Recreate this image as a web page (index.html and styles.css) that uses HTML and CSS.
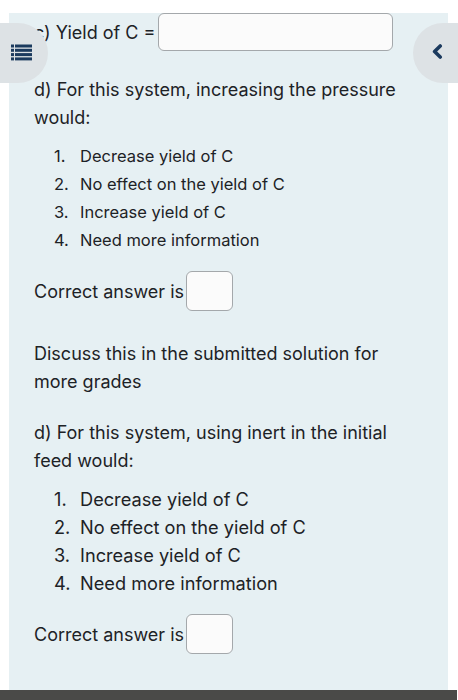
FILE: index.html
```html
<!DOCTYPE html>
<html>
<head>
<meta charset="utf-8">
<link rel="stylesheet" href="styles.css">
</head>
<body>
<div class="panel">
  <div class="yield-row">
    <span>c) Yield of C =</span>
    <span class="input wide"></span>
  </div>

  <p class="para q1">d) For this system, increasing the pressure would:</p>
  <ol class="options small">
    <li>Decrease yield of C</li>
    <li>No effect on the yield of C</li>
    <li>Increase yield of C</li>
    <li>Need more information</li>
  </ol>
  <div class="answer-row">
    <span>Correct answer is</span>
    <span class="input box"></span>
  </div>

  <p class="para discuss">Discuss this in the submitted solution for more grades</p>

  <p class="para q2">d) For this system, using inert in the initial feed would:</p>
  <ol class="options large">
    <li>Decrease yield of C</li>
    <li>No effect on the yield of C</li>
    <li>Increase yield of C</li>
    <li>Need more information</li>
  </ol>
  <div class="answer-row">
    <span>Correct answer is</span>
    <span class="input box"></span>
  </div>
</div>

<button class="side-btn left" aria-label="Menu">
  <svg width="21" height="17" viewBox="0 0 21 17">
    <g fill="#1b3a5e">
      <rect x="0" y="0.5" width="3" height="3"/>
      <rect x="4" y="0.5" width="17" height="3"/>
      <rect x="0" y="4.8" width="3" height="3"/>
      <rect x="4" y="4.8" width="17" height="3"/>
      <rect x="0" y="9.1" width="3" height="3"/>
      <rect x="4" y="9.1" width="17" height="3"/>
      <rect x="0" y="13.4" width="3" height="3"/>
      <rect x="4" y="13.4" width="17" height="3"/>
    </g>
  </svg>
</button>
<button class="side-btn right" aria-label="Back">
  <svg width="11" height="15" viewBox="0 0 11 15">
    <path d="M8.2 2 L2.6 7.5 L8.2 13" fill="none" stroke="#1b3a5e" stroke-width="3.6" stroke-linecap="round" stroke-linejoin="round"/>
  </svg>
</button>

<div class="bottom-bar"></div>
</body>
</html>
```

FILE: styles.css
```css
html, body {
  margin: 0;
  padding: 0;
  background: #ffffff;
}

body {
  font-family: "Inter", "Liberation Sans", sans-serif;
  color: #1d2226;
  width: 458px;
  height: 700px;
  overflow: hidden;
  position: relative;
}

.panel {
  margin: 13px 0 0 9px;
  width: 439px;
  background: #e6f0f3;
  padding: 0 14px 60px 25px;
  box-sizing: border-box;
  font-size: 18px;
}

.yield-row {
  display: flex;
  align-items: center;
  height: 38px;
  gap: 3px;
}

.input {
  display: block;
  background: #fbfbfb;
  border: 1px solid #a4a8ab;
  border-radius: 6px;
  box-sizing: border-box;
}

.input.wide {
  width: 235px;
  height: 38px;
}

.input.box {
  width: 47px;
  height: 40px;
}

.para {
  margin: 0;
  line-height: 28px;
}

.q1 {
  margin-top: 25px;
}

.q2 {
  margin-top: 23px;
  padding-right: 10px;
}

.discuss {
  margin-top: 29px;
  padding-right: 30px;
}

.options {
  margin: 10px 0 0 0;
  padding: 0 0 0 20px;
  line-height: 28px;
  list-style: none;
  counter-reset: opt;
}

.options li {
  display: flex;
  counter-increment: opt;
}

.options li::before {
  content: counter(opt) ".";
  width: 26px;
  flex: none;
}

.options.small {
  font-size: 16.5px;
}

.options.large {
  font-size: 18.2px;
}

.answer-row {
  display: flex;
  align-items: center;
  gap: 2px;
  margin-top: 17px;
}

.side-btn {
  position: absolute;
  top: 23px;
  height: 60px;
  border: none;
  padding: 0;
  background: #dde2e5;
  display: flex;
  align-items: center;
  cursor: pointer;
}

.side-btn.left {
  left: -14px;
  width: 62px;
  border-radius: 0 30px 30px 0;
  justify-content: flex-end;
  padding-right: 16px;
  box-sizing: border-box;
}

.side-btn.left svg {
  margin-top: -2px;
}

.side-btn.right {
  left: 413px;
  width: 60px;
  border-radius: 30px 0 0 30px;
  justify-content: flex-start;
  padding-left: 19px;
  box-sizing: border-box;
}

.side-btn.right svg {
  margin-top: -3px;
}

.bottom-bar {
  position: absolute;
  left: 0;
  right: 1px;
  top: 690px;
  height: 10px;
  background: #4a4a48;
}
```
